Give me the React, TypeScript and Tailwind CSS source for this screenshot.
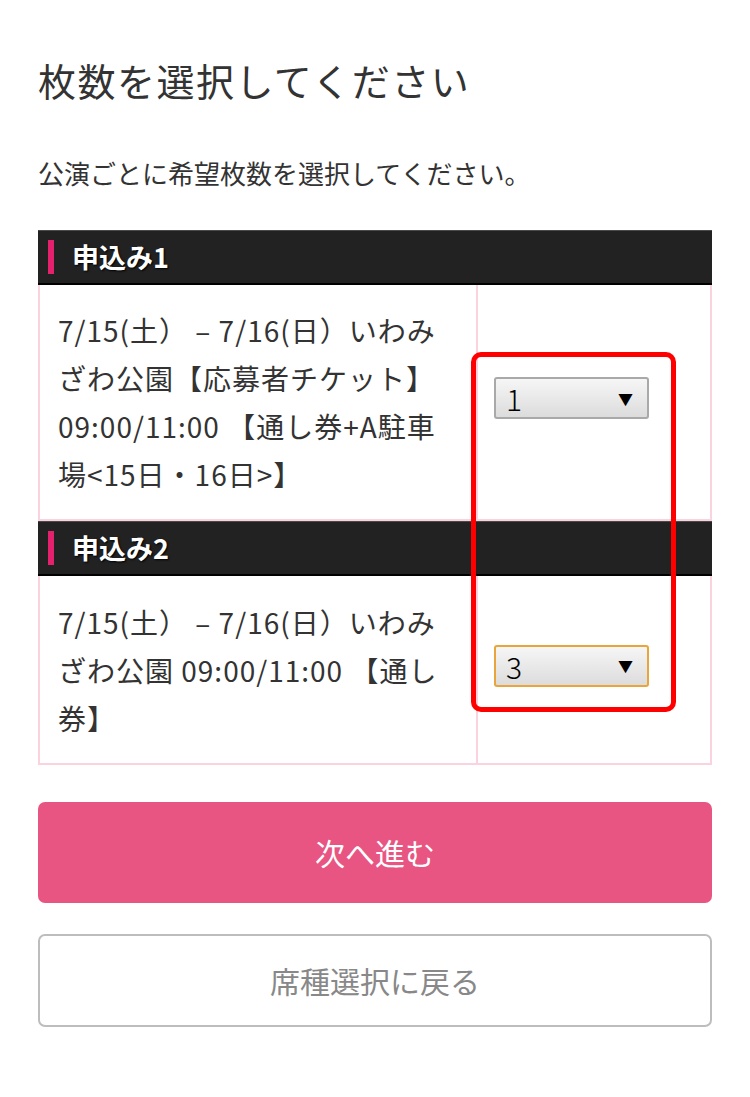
import React from 'react';

const font = { fontFamily: '"Noto Sans CJK JP", "Noto Sans", sans-serif' };

interface Entry {
  label: string;
  lines: string[];
  value: string;
  focused?: boolean;
}

const entries: Entry[] = [
  {
    label: '申込み1',
    lines: ['7/15(土） – 7/16(日）いわみ', 'ざわ公園【応募者チケット】', '09:00/11:00 【通し券+A駐車', '場<15日・16日>】'],
    value: '1',
  },
  {
    label: '申込み2',
    lines: ['7/15(土） – 7/16(日）いわみ', 'ざわ公園 09:00/11:00 【通し', '券】'],
    value: '3',
    focused: true,
  },
];

const FakeSelect: React.FC<{ value: string; focused?: boolean }> = ({ value, focused }) => (
  <div
    className={`w-[155px] h-[42px] flex items-center justify-between pl-[10px] pr-[14px] rounded-[3px] bg-gradient-to-b from-[#f6f6f6] to-[#dcdcdc] border-2 ${
      focused ? 'border-[#e9a53c]' : 'border-[#a9a9a9]'
    }`}
  >
    <span className="text-[30px] leading-none text-black font-light">{value}</span>
    <span className="text-[15px] leading-none text-black">▼</span>
  </div>
);

const Block: React.FC<{ entry: Entry; rowHeight: string }> = ({ entry, rowHeight }) => (
  <div>
    <div className="h-[55px] bg-[#222] border-t border-t-[#4a4a4a] border-b-2 border-b-black flex items-center pl-[10px]">
      <span className="w-[6px] h-[34px] bg-[#e5206d]" />
      <span className="ml-[18px] text-white text-[27px] font-bold [text-shadow:1px_1px_2px_#000]">{entry.label}</span>
    </div>
    <div className={`grid grid-cols-[438px_1fr] border-x-2 border-b-2 border-[#fbd3df] ${rowHeight}`}>
      <div className="border-r-2 border-[#fbd3df] pl-[18px] pr-[4px] flex flex-col justify-center text-[28px] leading-[48px] tracking-[1px] text-[#333]">
        {entry.lines.map((l, i) => (
          <div key={i} className="whitespace-nowrap">{l}</div>
        ))}
      </div>
      <div className="flex items-center pl-[16px] pb-[8px]">
        <FakeSelect value={entry.value} focused={entry.focused} />
      </div>
    </div>
  </div>
);

export default function App() {
  return (
    <div className="w-[750px] h-[1097px] bg-white px-[38px]" style={font}>
      <h1 className="pt-[55px] text-[38px] leading-[50px] text-[#333] font-normal tracking-[1.5px]">枚数を選択してください</h1>
      <p className="mt-[50px] text-[26px] leading-[36px] text-[#333]">公演ごとに希望枚数を選択してください。</p>

      <div className="relative mt-[39px]">
        <Block entry={entries[0]} rowHeight="h-[236px]" />
        <Block entry={entries[1]} rowHeight="h-[189px]" />
        {/* red highlight */}
        <div className="absolute left-[433px] top-[122px] w-[205px] h-[360px] border-[5px] border-[#f00] rounded-[10px] pointer-events-none" />
      </div>

      <button className="mt-[37px] w-full h-[101px] rounded-[7px] bg-[#e85582] text-white text-[30px]">次へ進む</button>
      <button className="mt-[31px] w-full h-[93px] rounded-[7px] bg-white border-2 border-[#bdbdbd] text-[#888] text-[30px]">席種選択に戻る</button>
    </div>
  );
}
